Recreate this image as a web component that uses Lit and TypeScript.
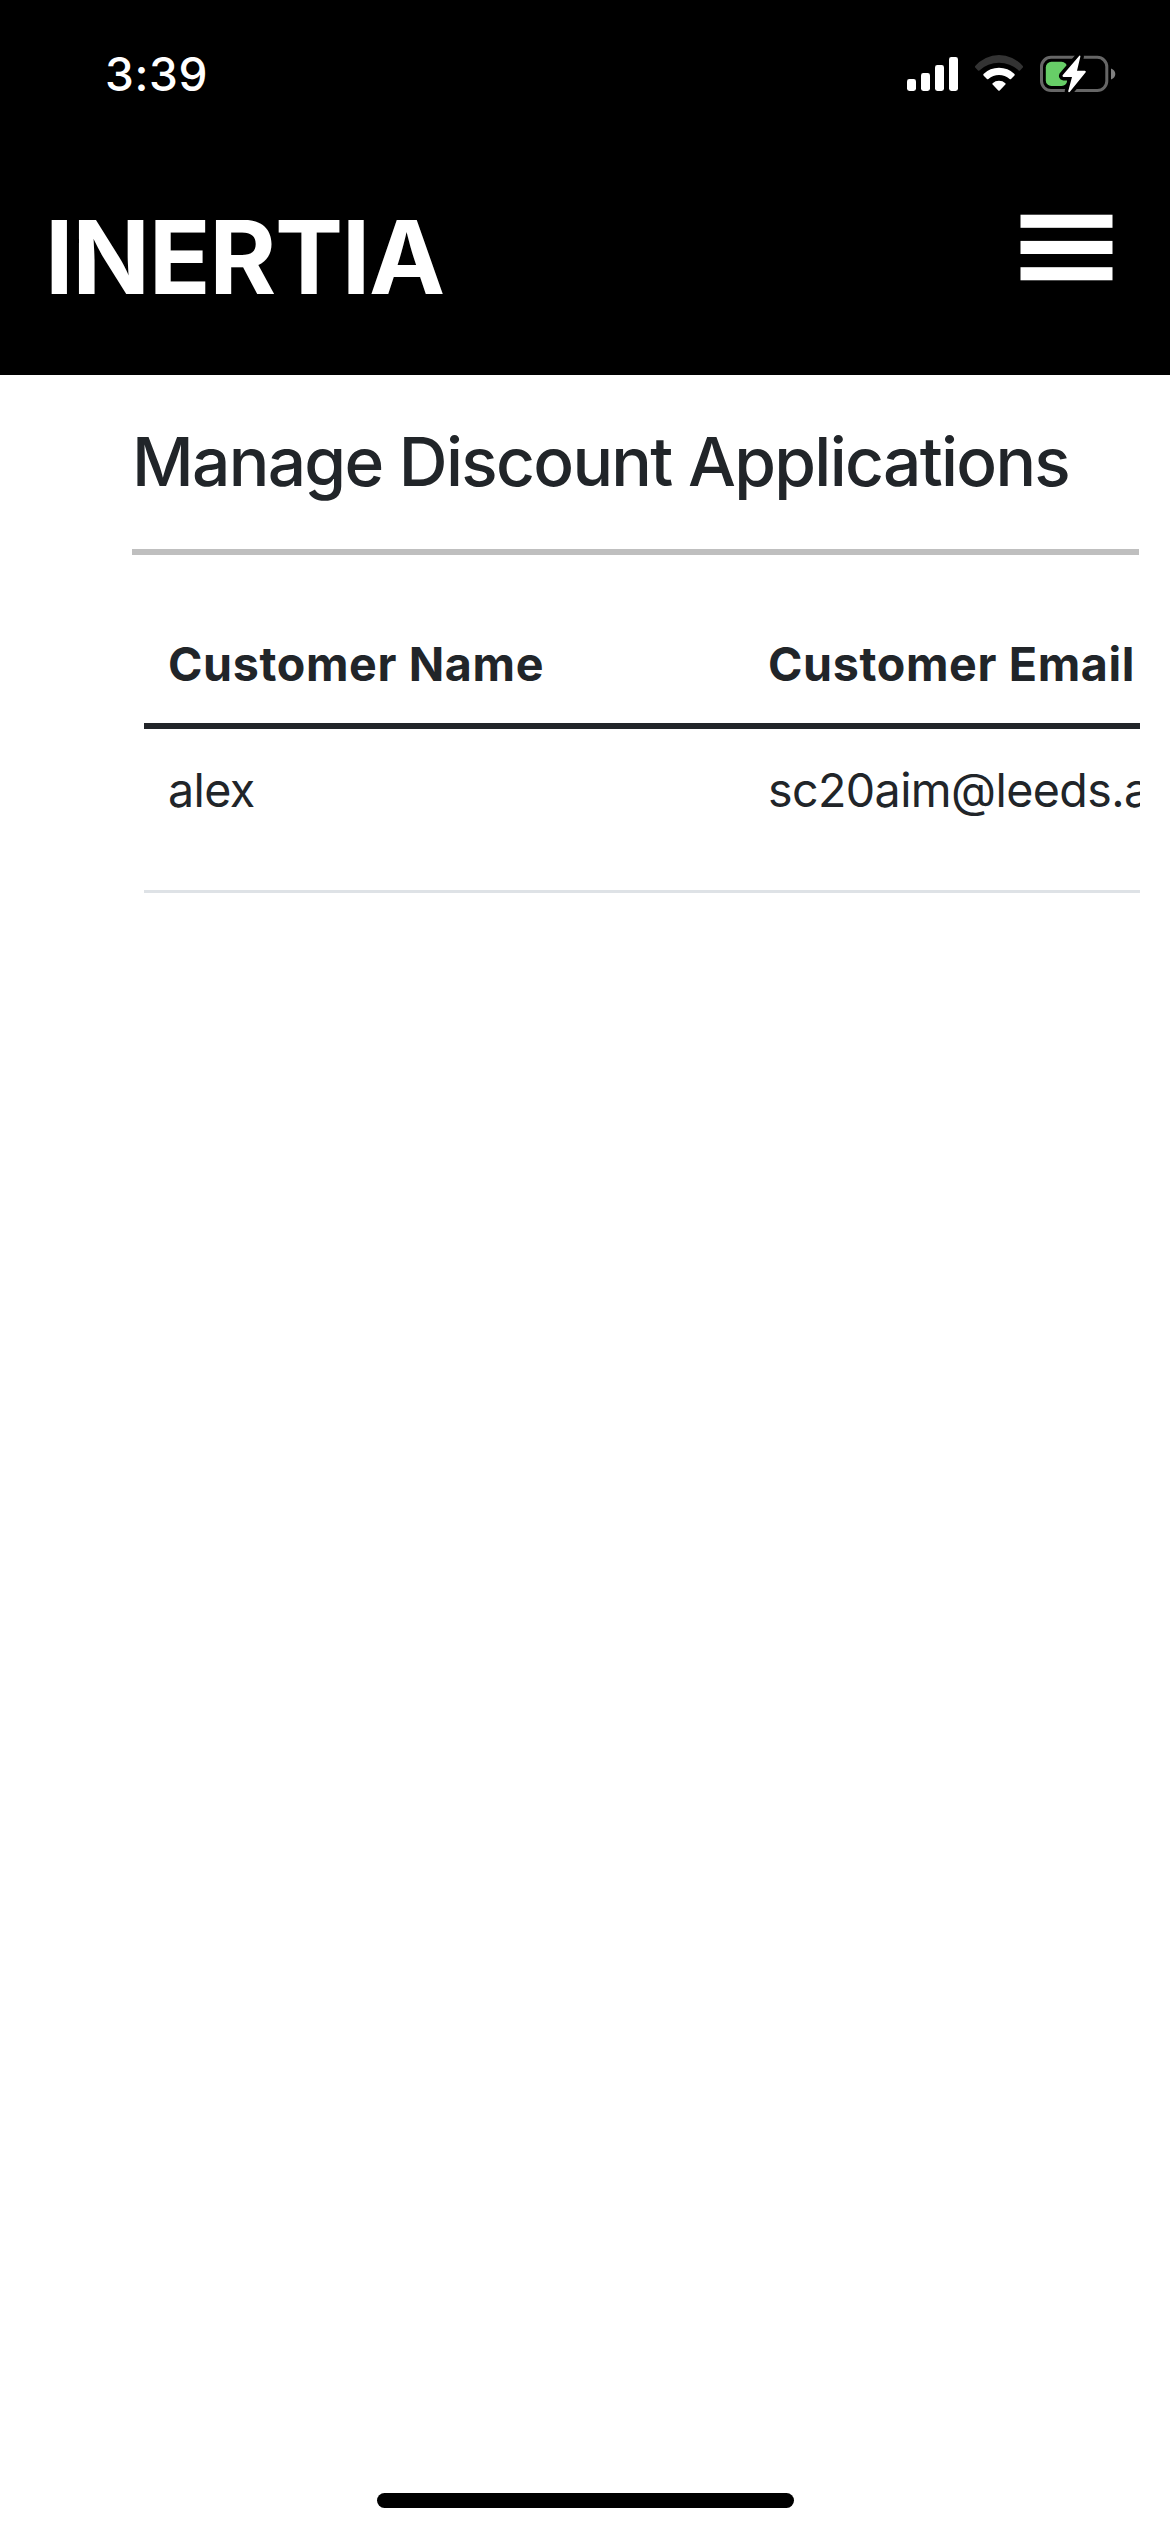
import { LitElement, html, css } from "lit";
import { customElement, property } from "lit/decorators.js";

interface Application {
  name: string;
  email: string;
}

@customElement("status-bar")
class StatusBar extends LitElement {
  @property() time = "";

  static styles = css`
    :host {
      display: flex;
      justify-content: space-between;
      align-items: flex-start;
      height: 141px;
      box-sizing: border-box;
      padding: 46px 50px 0 105px;
      background: #000;
      color: #fff;
    }
    .time {
      font-size: 46px;
      font-weight: 500;
      line-height: 56px;
      letter-spacing: 0.62px;
    }
    .icons {
      display: block;
    }
  `;

  render() {
    return html`
      <span class="time">${this.time}</span>
      <svg class="icons" width="220" height="56" viewBox="900 46 220 56" aria-hidden="true">
        <g fill="#fff">
          <rect x="907" y="79" width="9" height="12" rx="2.4" />
          <rect x="921" y="73" width="9" height="18" rx="2.4" />
          <rect x="935" y="65" width="9" height="26" rx="2.4" />
          <rect x="949" y="57" width="9" height="34" rx="2.4" />
        </g>
        <path
          fill="#333"
          d="M975.2 66.1A31 31 0 0 1 1022.8 66.1Q1023.4 66.9 1022.8 67.5L1020 70.4Q1019.3 71 1018.6 70.4A29 29 0 0 0 979.4 70.4Q978.7 71 978 70.4L975.2 67.5Q974.6 66.9 975.2 66.1Z"
        />
        <g fill="#fff">
          <path
            d="M983.5 74.1A22 22 0 0 1 1014.5 74.1Q1015 74.8 1014.5 75.4L1011 79Q1010.3 79.5 1009.6 78.9A16.4 16.4 0 0 0 988.4 78.9Q987.7 79.5 987 79L983.5 75.4Q983 74.8 983.5 74.1Z"
          />
          <path
            d="M992.6 83.3A9.6 9.6 0 0 1 1005.4 83.3Q1006 84 1005.4 84.6L999.7 90.5Q999 91.1 998.3 90.5L992.6 84.6Q992 84 992.6 83.3Z"
          />
        </g>
        <rect x="1041.5" y="57.3" width="65.3" height="33.2" rx="9.5" fill="none" stroke="#666" stroke-width="3" />
        <rect x="1045.8" y="61.8" width="21.4" height="24.2" rx="5.6" fill="#67ce67" />
        <path fill="#808080" d="M1111 68.6Q1115.3 70.3 1115.3 74T1111 79.4Z" />
        <path
          d="M1079.3 55.8L1062.6 75.2Q1062 76.6 1063.4 76.9H1072L1068.2 91.3Q1068.7 92.8 1069.9 91.8L1085.7 72.3Q1086.3 71 1084.8 70.8H1077L1080.4 56.6Q1080.3 55.1 1079.3 55.8Z"
          fill="#fff"
          stroke="#000"
          stroke-width="7"
          stroke-linejoin="round"
          paint-order="stroke"
        />
      </svg>
    `;
  }
}

@customElement("site-header")
class SiteHeader extends LitElement {
  static styles = css`
    :host {
      display: flex;
      justify-content: space-between;
      align-items: flex-start;
      height: 234px;
      box-sizing: border-box;
      padding: 54px 57px 0 45px;
      background: #000;
      color: #fff;
    }
    .brand {
      font-size: 102px;
      font-weight: 700;
      line-height: 124px;
      letter-spacing: -1.34px;
    }
    .menu {
      margin: 0;
      padding: 19px 0 0;
      border: 0;
      background: none;
    }
    .bars {
      display: block;
    }
  `;

  render() {
    return html`
      <span class="brand">INERTIA</span>
      <button class="menu" aria-label="Menu">
        <svg class="bars" width="93" height="67" viewBox="0 0 93 67" fill="#fff">
          <rect x="0.5" y="0.7" width="92" height="13.1" />
          <rect x="0.5" y="26.9" width="92" height="13.1" />
          <rect x="0.5" y="53.2" width="92" height="13.1" />
        </svg>
      </button>
    `;
  }
}

@customElement("application-table")
class ApplicationTable extends LitElement {
  @property({ attribute: false }) rows: Application[] = [];

  static styles = css`
    :host {
      display: block;
      overflow: hidden;
      color: #212529;
      font-size: 46.6px;
      line-height: 72px;
    }
    .table {
      width: 1200px;
      border-collapse: separate;
      border-spacing: 0;
      table-layout: fixed;
    }
    .head {
      padding: 24px 24px 23px;
      border-bottom: 6px solid #212529;
      text-align: left;
      font-weight: 700;
      letter-spacing: 0.63px;
      white-space: nowrap;
    }
    .cell {
      padding: 25px 24px 64px;
      border-bottom: 3px solid #dee2e6;
      letter-spacing: -0.6px;
      white-space: nowrap;
    }
  `;

  render() {
    return html`
      <table class="table">
        <thead>
          <tr>
            <th class="head">Customer Name</th>
            <th class="head">Customer Email</th>
          </tr>
        </thead>
        <tbody>
          ${this.rows.map(
            (row) => html`
              <tr>
                <td class="cell">${row.name}</td>
                <td class="cell">${row.email}</td>
              </tr>
            `
          )}
        </tbody>
      </table>
    `;
  }
}

@customElement("app-root")
class AppRoot extends LitElement {
  private applications: Application[] = [{ name: "alex", email: "sc20aim@leeds.ac.uk" }];

  static styles = css`
    :host {
      display: flex;
      flex-direction: column;
      height: 2532px;
      overflow: hidden;
      background: #fff;
      font-family: Inter, "Liberation Sans", sans-serif;
    }
    .content {
      flex: 1;
      padding: 46px 30px 0 132px;
    }
    .title {
      margin: 0;
      color: #212529;
      font-size: 67.6px;
      font-weight: 500;
      line-height: 81px;
      letter-spacing: -1.7px;
      white-space: nowrap;
    }
    .rule {
      height: 6px;
      margin: 47px 1px 49px 0;
      border: 0;
      background: #bfbfbf;
    }
    .list {
      margin-left: 12px;
    }
    .home {
      align-self: center;
      width: 417px;
      height: 15px;
      margin: 0 0 24px 1px;
      border-radius: 8px;
      background: #000;
    }
  `;

  render() {
    return html`
      <status-bar time="3:39"></status-bar>
      <site-header></site-header>
      <main class="content">
        <h1 class="title">Manage Discount Applications</h1>
        <hr class="rule" />
        <application-table class="list" .rows=${this.applications}></application-table>
      </main>
      <div class="home"></div>
    `;
  }
}
